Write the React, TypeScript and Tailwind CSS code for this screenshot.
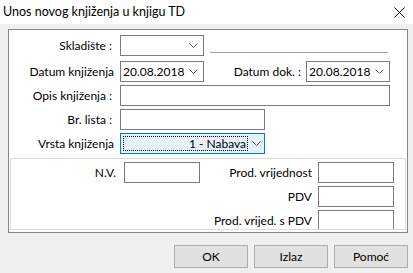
// Dialog: "Unos novog knjiženja u knjigu TD" – WinForms-style entry form.

const font = "font-['Lato','Noto_Sans','Liberation_Sans',sans-serif]";

function Chevron({ className = "" }: { className?: string }) {
  return (
    <svg width="9" height="6" viewBox="0 0 9 6" className={className}>
      <path d="M0.5 0.5 L4.5 4.5 L8.5 0.5" fill="none" stroke="#606060" strokeWidth="1" />
    </svg>
  );
}

function Label({ text, w }: { text: string; w: string }) {
  return (
    <div className={`flex shrink-0 items-center justify-end overflow-hidden whitespace-nowrap text-[12px] text-black ${w}`}>
      {text}
    </div>
  );
}

function Box({ w, children }: { w: string; children?: React.ReactNode }) {
  return (
    <div className={`flex h-[21px] shrink-0 items-center border border-[#7a7a7a] bg-white ${w}`}>
      {children}
    </div>
  );
}

function Combo({ w, value }: { w: string; value?: string }) {
  return (
    <Box w={w}>
      <span className="flex-1 pl-[2px] text-[12px] text-black">{value}</span>
      <Chevron className="mr-[5px]" />
    </Box>
  );
}

function Btn({ text }: { text: string }) {
  return (
    <button
      type="button"
      className="h-[23px] w-[74px] border border-[#adadad] bg-[#e1e1e1] text-[12px] text-black"
    >
      {text}
    </button>
  );
}

export default function App() {
  return (
    <div className={`h-[273px] w-[413px] overflow-hidden bg-[#f0f0f0] ${font}`}>
      {/* title bar */}
      <div className="flex h-[24px] items-center justify-between bg-white pl-[3px] pr-[8px]">
        <span className="text-[12.5px] text-black">Unos novog knjiženja u knjigu TD</span>
        <svg width="11" height="11" viewBox="0 0 11 11">
          <path d="M0.5 0.5 L10.5 10.5 M10.5 0.5 L0.5 10.5" stroke="#000" strokeWidth="1" />
        </svg>
      </div>

      {/* main panel */}
      <div className="ml-[8px] mt-[5px] flex h-[204px] w-[400px] flex-col border border-[#828790] bg-white">
        <div className="mt-[5px] flex h-[21px] items-center">
          <Label text="Skladište :" w="w-[103px]" />
          <div className="w-[8px]" />
          <Combo w="w-[84px]" />
          <div className="mb-[3px] ml-[6px] h-px w-[178px] self-end bg-[#a0a0a0]" />
        </div>

        <div className="mt-[5px] flex h-[21px] items-center">
          <Label text="Datum knjiženja" w="w-[105px]" />
          <div className="w-[6px]" />
          <Combo w="w-[84px]" value="20.08.2018" />
          <Label text="Datum dok. :" w="w-[97px]" />
          <div className="w-[5px]" />
          <Combo w="w-[84px]" value="20.08.2018" />
        </div>

        <div className="mt-[3px] flex h-[21px] items-center">
          <Label text="Opis knjiženja :" w="w-[103px]" />
          <div className="w-[8px]" />
          <Box w="w-[270px]" />
        </div>

        <div className="mt-[3px] flex h-[21px] items-center">
          <Label text="Br. lista :" w="w-[103px]" />
          <div className="w-[8px]" />
          <Box w="w-[145px]" />
        </div>

        <div className="mt-[3px] flex h-[21px] items-center">
          <Label text="Vrsta knjiženja" w="w-[105px]" />
          <div className="w-[6px]" />
          <div className="flex h-[21px] w-[145px] items-center border border-[#0078d7] bg-[#e5f1fb]">
            <div className="ml-[2px] flex h-[15px] flex-1 items-center justify-end border border-dotted border-black pr-[1px] text-[12px] text-black">
              1 - Nabava
            </div>
            <Chevron className="ml-[4px] mr-[3px]" />
          </div>
        </div>

        {/* value group */}
        <div className="mx-[1px] mt-[4px] h-[72px] overflow-hidden border border-[#dcdcdc] bg-white">
          <div className="mt-[3px] flex h-[21px] items-center">
            <Label text="N.V." w="w-[105px]" />
            <div className="w-[8px]" />
            <Box w="w-[76px]" />
            <Label text="Prod. vrijednost" w="w-[112px]" />
            <div className="w-[6px]" />
            <Box w="w-[76px]" />
          </div>
          <div className="mt-[3px] flex h-[21px] items-center">
            <div className="w-[189px] shrink-0" />
            <Label text="PDV" w="w-[112px]" />
            <div className="w-[6px]" />
            <Box w="w-[76px]" />
          </div>
          <div className="mt-[3px] flex h-[21px] items-center">
            <div className="w-[201px] shrink-0" />
            <Label text="Prod. vrijed. s PDV" w="w-[100px]" />
            <div className="w-[6px]" />
            <Box w="w-[76px]" />
          </div>
        </div>
      </div>

      {/* buttons */}
      <div className="mr-[5px] mt-[12px] flex justify-end gap-[6px]">
        <Btn text="OK" />
        <Btn text="Izlaz" />
        <Btn text="Pomoć" />
      </div>
    </div>
  );
}
